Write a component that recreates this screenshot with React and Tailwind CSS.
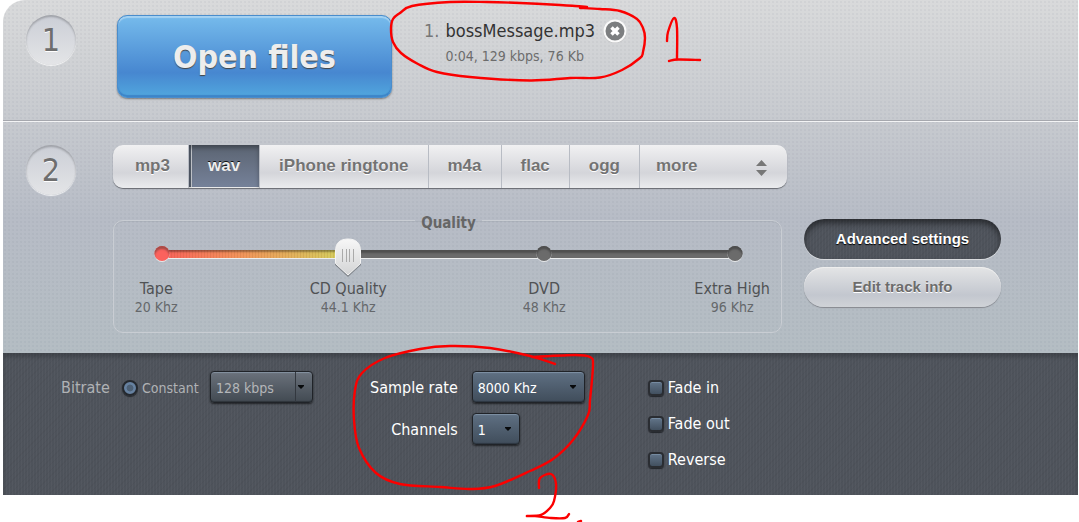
import { useState } from "react";

const light =
  "bg-[radial-gradient(rgba(90,100,120,0.06)_1px,transparent_1px),linear-gradient(to_bottom,#d9dadb_0%,#c7cacf_34%,#b7bcc6_62%,#b4bdc3_100%)] bg-[size:4px_4px,100%_100%]";
const dark =
  "bg-[repeating-linear-gradient(90deg,rgba(255,255,255,0.03)_0_1px,transparent_1px_3px),repeating-linear-gradient(135deg,rgba(0,0,0,0.03)_0_1px,transparent_1px_4px),linear-gradient(#4e535b,#4e535b)]";

function Step({ n }) {
  return (
    <div className="flex size-[50px] shrink-0 items-center justify-center rounded-full bg-linear-to-b from-[#cbced6] to-[#e4e5e7] text-[32px] leading-none text-[#6e6e6e] shadow-[inset_0_2px_2px_rgba(0,0,0,0.22),0_1px_1px_rgba(255,255,255,0.8)] [text-shadow:0_1px_0_#fff]">
      {n}
    </div>
  );
}

function Tab({ active, onClick, children }) {
  const base =
    "h-full px-[19px] first:pl-[22px] first:pr-[18px] font-['Liberation_Sans',sans-serif] text-[17px] font-bold leading-5 whitespace-nowrap border-r pb-[2px]";
  return (
    <button
      type="button"
      onClick={onClick}
      aria-pressed={active}
      className={
        active
          ? base +
            " border-[#b8bcc4] bg-linear-to-b from-[#5b6472] to-[#76829a] text-[#eee] shadow-[inset_0_3px_4px_rgba(0,0,0,0.3),inset_0_-1px_0_#eee,inset_2px_0_0_#555e6c,inset_3px_0_0_#c4c8ce] [text-shadow:0_-1px_0_#111]"
          : base + " border-[#b8bcc4] text-[#737373] [text-shadow:0_1px_0_#fff]"
      }
    >
      {children}
    </button>
  );
}

function DarkSelect({ id, label, width, options, muted }) {
  return (
    <div className={"relative h-8 " + width}>
      <select
        id={id}
        aria-label={label}
        className={
          "size-full appearance-none rounded-[4px] border border-[#202328] pl-[5px] pt-[2px] text-[14px] leading-5 shadow-[inset_0_1px_1px_rgba(160,180,200,0.5),inset_0_-1px_1px_rgba(0,0,0,0.3),0_1px_2px_rgba(0,0,0,0.6)] " +
          (muted
            ? "bg-linear-to-b from-[#6b727c] to-[#424a52] text-[#b4b6b9]"
            : "bg-linear-to-b from-[#5f7083] to-[#404d5b] text-white")
        }
      >
        {options.map((o) => (
          <option key={o}>{o}</option>
        ))}
      </select>
      {muted && <span className="pointer-events-none absolute inset-y-px right-[17px] w-px bg-[#33383f]" />}
      <svg className="pointer-events-none absolute right-[9px] top-[14px]" width="6" height="4" viewBox="0 0 6 4">
        <path d="M0 0H6V1L3 4L0 1Z" fill="#080a0c" />
      </svg>
    </div>
  );
}

const stops = [
  { name: "Tape", khz: "20 Khz", at: "left-[-1%]" },
  { name: "CD Quality", khz: "44.1 Khz", at: "left-[32.5%]" },
  { name: "DVD", khz: "48 Khz", at: "left-[66.7%]" },
  { name: "Extra High", khz: "96 Khz", at: "left-[99.5%]" },
];

function QualitySlider() {
  return (
    <fieldset className="h-[123px] min-w-0 flex-1 rounded-[10px] border border-[#c9cdd3] pl-12 pr-[46px] shadow-[inset_0_1px_0_rgba(120,125,135,0.15)]">
      <legend className="mx-auto px-[6px] pt-[6px] text-[15px] font-bold leading-[14px] text-[#666]">Quality</legend>
      <div className="relative mt-5 h-[9px]">
        <div className="h-full border-b border-[#eceeef] bg-[#6b6b6b] shadow-[inset_0_3px_2px_#505050]" />
        {["left-[66.7%]", "left-full"].map((at) => (
          <span
            key={at}
            className={
              "absolute -top-[4px] size-[15px] -translate-x-1/2 rounded-full bg-[#6b6b6b] shadow-[inset_0_3px_2px_#4d4d4d,0_1px_0_#e6e8ea] " +
              at
            }
          />
        ))}
        <div className="absolute left-0 top-0 h-[9px] w-[32.5%] border-b border-[#eceeef] bg-[repeating-linear-gradient(90deg,rgba(120,60,0,0.1)_0_1px,transparent_1px_3px),linear-gradient(90deg,#f8615b,#f2915b_40%,#d2d35f)] shadow-[inset_0_2px_2px_rgba(0,0,0,0.35)]" />
        <span className="absolute -top-[4px] left-0 size-[15px] -translate-x-1/2 rounded-full bg-[#fb625d] shadow-[inset_0_3px_2px_#a64b47,0_1px_0_#e6e8ea]" />
        <svg className="absolute -top-[12px] left-[32.5%] -translate-x-1/2" width="28" height="42" viewBox="0 0 28 42">
          <defs>
            <linearGradient id="thumb" x1="0" y1="0" x2="0" y2="1">
              <stop offset="0" stopColor="#f7f7f7" />
              <stop offset="1" stopColor="#d3d4d5" />
            </linearGradient>
          </defs>
          <path d="M1 14C1 6 6 2 14 2S27 6 27 14V27L14 39L1 27Z" fill="#000" opacity=".28" />
          <path d="M1.500 13C1.500 5 6 1 14 1S26.500 5 26.500 13V25.500L14 37L1.500 25.500Z" fill="url(#thumb)" stroke="#f4f4f4" />
          <path d="M8.500 11V24M12.500 11V24M15.500 11V24M19.500 11V24" stroke="#aaa" />
        </svg>
        <input
          type="range"
          min="0"
          max="3"
          defaultValue="1"
          aria-label="Quality"
          className="absolute -inset-x-3 -top-3 h-10 cursor-pointer opacity-0"
        />
      </div>
      <div className="relative mt-5">
        {stops.map((s) => (
          <div key={s.name} className={"absolute -translate-x-1/2 whitespace-nowrap text-center " + s.at}>
            <div className="text-[16px] leading-5 text-[#505254]">{s.name}</div>
            <div className="text-[14px] leading-4 text-[#65686b]">{s.khz}</div>
          </div>
        ))}
      </div>
    </fieldset>
  );
}

function Check({ label }) {
  return (
    <label className="flex h-9 items-center gap-1">
      <input
        type="checkbox"
        className="size-4 appearance-none rounded-[4px] border-2 border-[#2a2d32] bg-linear-to-b from-[#62758a] to-[#42505f] shadow-[inset_0_1px_0_rgba(150,175,200,0.4),0_1px_1px_#22252a] checked:bg-[#9fb4ca]"
      />
      {label}
    </label>
  );
}

const strokes = [
  [[587, 7], [575, 6], [560, 5], [520, 3], [487, 2], [450, 2], [412, 6], [400, 13], [393, 19], [391, 29], [393, 42], [401, 53], [418, 64], [437, 72], [470, 77], [530, 80.5], [570, 78], [600, 77.500], [622, 70], [640, 58], [643, 52], [645, 38], [643, 28], [637, 19], [620, 11], [600, 9], [580, 8]],
  [[667, 41], [668, 32], [674, 18], [677, 28], [677, 59]],
  [[669, 61], [678, 59.500], [700, 60]],
  [[555, 364], [530, 356], [490, 348], [450, 346], [420, 349], [385, 358], [362, 373], [355, 390], [354, 420], [359, 448], [376, 473], [400, 484], [440, 487], [470, 489], [495, 486], [530, 471], [553, 459], [573, 440], [588, 415], [590, 400], [593, 365], [590, 357], [575, 355], [532, 357]],
  [[539, 488], [540, 478], [551, 474], [556, 484], [554, 501], [550, 508], [541, 515], [527, 516], [535, 516], [551, 518], [565, 518], [569, 514]],
  [[578, 522], [581, 521]],
];

function smoothPath(points) {
  let d = `M${points[0][0]} ${points[0][1]}`;
  for (let i = 0; i < points.length - 1; i++) {
    const p0 = points[i - 1] || points[i];
    const p1 = points[i];
    const p2 = points[i + 1];
    const p3 = points[i + 2] || p2;
    d += `C${p1[0] + (p2[0] - p0[0]) / 6} ${p1[1] + (p2[1] - p0[1]) / 6} ${p2[0] - (p3[0] - p1[0]) / 6} ${p2[1] - (p3[1] - p1[1]) / 6} ${p2[0]} ${p2[1]}`;
  }
  return d;
}

function Annotations() {
  return (
    <svg
      className="pointer-events-none absolute left-0 top-0"
      width="1079"
      height="522"
      viewBox="0 0 1079 522"
      fill="none"
      stroke="#fb0000"
      strokeWidth="2.400"
      strokeLinecap="round"
      strokeLinejoin="round"
      aria-hidden="true"
    >
      {strokes.map((s, i) => (
        <path key={i} d={smoothPath(s)} />
      ))}
    </svg>
  );
}

export default function App() {
  const [format, setFormat] = useState("wav");
  return (
    <div className="relative min-h-screen overflow-hidden bg-white pl-[3px] pr-px font-['DejaVu_Sans_Condensed','Noto_Sans',sans-serif]">
      <div className={"rounded-tl-[22px] " + light}>
        <section className="flex border-b border-[#a6a8ae] pb-[22px] pl-[23px] pt-[15px]">
          <Step n="1" />
          <button
            type="button"
            className="ml-[41px] h-[83px] w-[275px] shrink-0 rounded-[10px] border border-[#4a8dcc] bg-linear-to-b from-[#76bbec] via-[#4787d0] via-70% to-[#51a7de] text-[32px] font-bold leading-10 text-[#ededed] shadow-[inset_0_2px_1px_rgba(255,255,255,0.35),inset_0_-2px_1px_rgba(40,100,180,0.5),0_1px_2px_rgba(0,0,0,0.4)] [text-shadow:0_1px_1px_#444]"
          >
            Open files
          </button>
          <ol className="ml-8 min-w-0 pt-1">
            <li className="flex gap-[6px]">
              <span className="text-[18px] leading-6 text-[#777]">1.</span>
              <div>
                <div className="flex items-center gap-2">
                  <span className="text-[18px] leading-6 text-[#333]">bossMessage.mp3</span>
                  <button type="button" aria-label="Remove bossMessage.mp3" className="size-6">
                    <svg width="24" height="24" viewBox="0 0 24 24">
                      <circle cx="12" cy="12.500" r="11.500" fill="#aaa" opacity=".6" />
                      <circle cx="12" cy="12" r="10.500" fill="#7c7e80" stroke="#fafafa" strokeWidth="2" />
                      <path d="M8.500 8.500L15.500 15.500M15.500 8.500L8.500 15.500" stroke="#fff" strokeWidth="3.500" />
                    </svg>
                  </button>
                </div>
                <div className="mt-[3px] text-[14px] leading-5 text-[#6c6c6c]">0:04, 129 kbps, 76 Kb</div>
              </div>
            </li>
          </ol>
        </section>

        <section className="flex border-t border-[#f3f4f5] pb-5 pl-[23px] pr-4 pt-[23px]">
          <Step n="2" />
          <div className="ml-[37px] min-w-0 flex-1">
            <div className="flex h-[43px] max-w-[674px] overflow-hidden rounded-[10px] bg-linear-to-b from-[#f1f1f2] via-[#d4d5da] via-65% to-[#ebecee] shadow-[0_1px_1px_#66696f]">
              {["mp3", "wav", "iPhone ringtone", "m4a", "flac", "ogg"].map((f) => (
                <Tab key={f} active={format === f} onClick={() => setFormat(f)}>
                  {f}
                </Tab>
              ))}
              <div className="relative min-w-0 flex-1">
                <select
                  aria-label="More formats"
                  className="size-full appearance-none bg-transparent pb-[2px] pl-4 font-['Liberation_Sans',sans-serif] text-[17px] font-bold leading-5 text-[#737373] [text-shadow:0_1px_0_#fff]"
                >
                  <option>more</option>
                </select>
                <svg className="pointer-events-none absolute right-5 top-[15px]" width="11" height="16" viewBox="0 0 11 16">
                  <path d="M5.500 0L11 6H0ZM0 10H11L5.500 16Z" fill="#777" />
                </svg>
              </div>
            </div>
            <div className="mt-[22px] flex gap-[22px]">
              <div className="flex min-w-0 max-w-[669px] flex-1">
                <QualitySlider />
              </div>
              <div className="flex w-[197px] shrink-0 flex-col gap-2 pt-[9px] font-['Liberation_Sans',sans-serif] text-[15px] font-bold leading-5">
                <button
                  type="button"
                  className={"h-10 rounded-full text-white shadow-[inset_0_4px_6px_rgba(0,0,0,0.5),0_1px_0_#d8dadd] [text-shadow:0_1px_1px_#000] " + dark}
                >
                  Advanced settings
                </button>
                <button
                  type="button"
                  className="h-10 rounded-full bg-linear-to-b from-[#e4e5e6] via-[#c3c7cf] via-70% to-[#d0d3d7] text-[#6c6c6c] shadow-[inset_0_1px_0_#eee,0_1px_1px_#85888e] [text-shadow:0_1px_0_#fff]"
                >
                  Edit track info
                </button>
              </div>
            </div>
          </div>
        </section>
      </div>

      <section className={"flex h-[142px] items-start pt-[18px] text-[16px] leading-5 text-white shadow-[inset_0_4px_4px_rgba(0,0,0,0.2)] " + dark}>
        <div className="flex items-center pl-[58px] text-[#b0b2b5]">
          <span className="w-[61px] pt-[2px]">Bitrate</span>
          <label className="flex w-[88px] items-center gap-1 pt-[2px] text-[14px]">
            <input
              type="radio"
              name="mode"
              className="size-4 appearance-none rounded-full border-2 border-[#24282e] bg-[radial-gradient(#4d6075_35%,#6681a0_45%)] shadow-[0_1px_1px_#25282d]"
            />
            Constant
          </label>
          <DarkSelect id="bitrate" label="Bitrate" width="w-[103px]" options={["128 kbps"]} muted />
        </div>
        <div className="ml-[57px] grid grid-cols-[auto_auto] items-center gap-x-[14px] gap-y-[10px]">
          <label htmlFor="sample-rate" className="pt-[2px] text-right">Sample rate</label>
          <DarkSelect id="sample-rate" width="w-[113px]" options={["8000 Khz"]} />
          <label htmlFor="channels" className="pt-[2px] text-right">Channels</label>
          <DarkSelect id="channels" width="w-12" options={["1"]} />
        </div>
        <div className="ml-[63px] -mt-px">
          <Check label="Fade in" />
          <Check label="Fade out" />
          <Check label="Reverse" />
        </div>
      </section>
      <Annotations />
    </div>
  );
}
